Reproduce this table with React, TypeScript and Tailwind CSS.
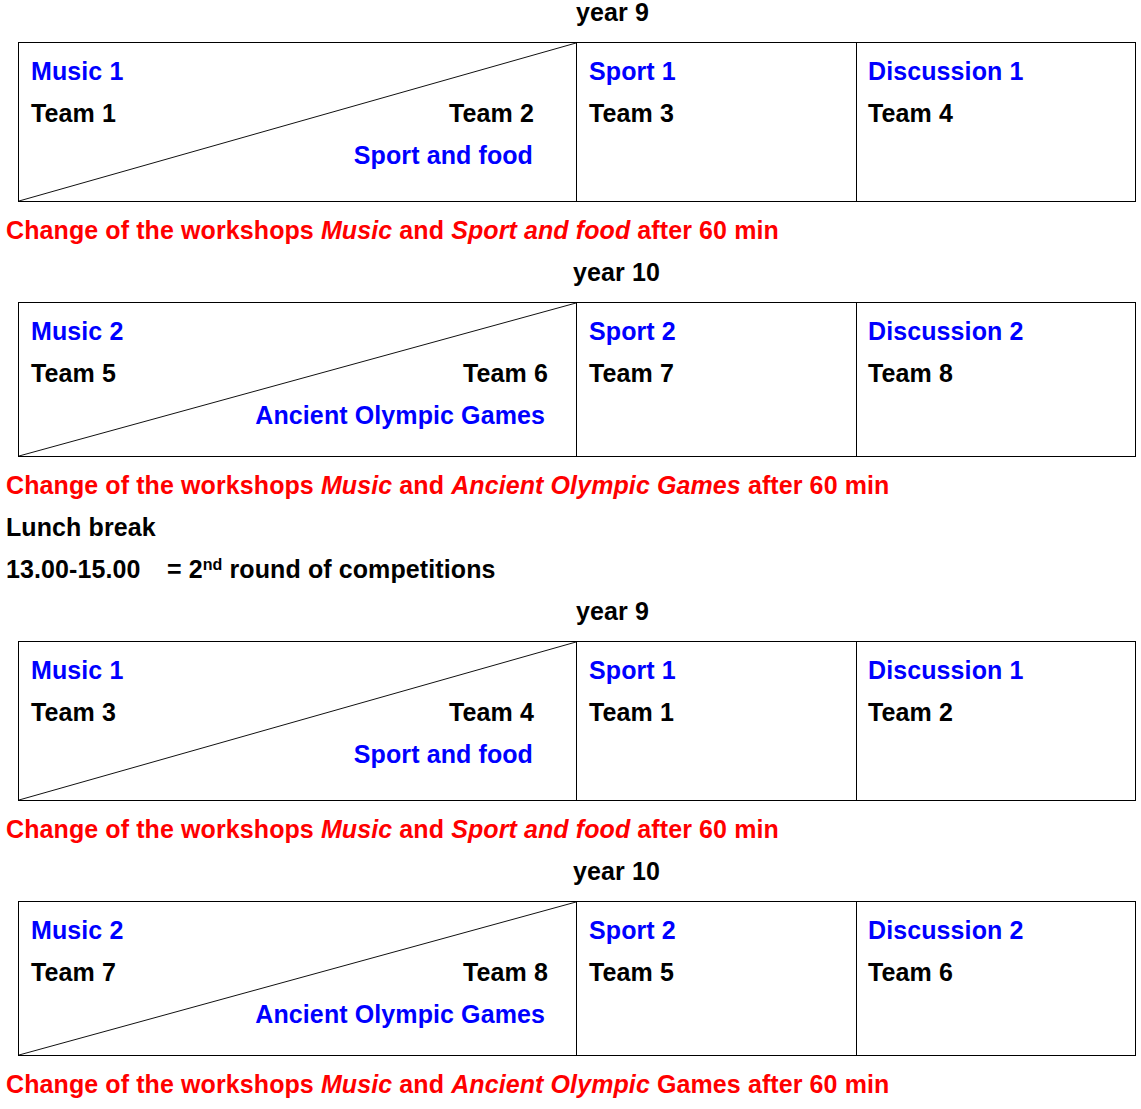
import React from "react";

type Round = {
  year: string;
  yearPad: string;
  height: string;
  music: string;
  teamA: string;
  teamB: string;
  teamBPad: string;
  other: string;
  otherPad: string;
  sport: string;
  sportTeam: string;
  disc: string;
  discTeam: string;
};

const morning: Round[] = [
  {
    year: "year 9",
    yearPad: "pl-[576px]",
    height: "h-[160px]",
    music: "Music 1",
    teamA: "Team 1",
    teamB: "Team 2",
    teamBPad: "pr-[42px]",
    other: "Sport and food",
    otherPad: "pr-[43px]",
    sport: "Sport 1",
    sportTeam: "Team 3",
    disc: "Discussion 1",
    discTeam: "Team 4",
  },
  {
    year: "year 10",
    yearPad: "pl-[573px]",
    height: "h-[155px]",
    music: "Music 2",
    teamA: "Team 5",
    teamB: "Team 6",
    teamBPad: "pr-[28px]",
    other: "Ancient Olympic Games",
    otherPad: "pr-[31px]",
    sport: "Sport 2",
    sportTeam: "Team 7",
    disc: "Discussion 2",
    discTeam: "Team 8",
  },
];

const afternoon: Round[] = [
  { ...morning[0], teamA: "Team 3", teamB: "Team 4", sportTeam: "Team 1", discTeam: "Team 2" },
  { ...morning[1], teamA: "Team 7", teamB: "Team 8", sportTeam: "Team 5", discTeam: "Team 6" },
];

const Table = ({ r, first }: { r: Round; first?: boolean }) => (
  <div
    className={`${first ? "mt-[18px]" : "mt-[9px]"} ${r.height} ml-[18px] flex w-[1118px] border border-black`}
  >
    {/* split cell */}
    <div className="relative w-[557px] pl-[12px] pt-[7px]">
      <svg
        className="absolute inset-0 h-full w-full"
        viewBox="0 0 100 100"
        preserveAspectRatio="none"
      >
        <line x1="0" y1="100" x2="100" y2="0" stroke="#111" strokeWidth="1" vectorEffect="non-scaling-stroke" />
      </svg>
      <p className="relative text-[#0000ff]">{r.music}</p>
      <div className={`relative flex justify-between ${r.teamBPad}`}>
        <span>{r.teamA}</span>
        <span>{r.teamB}</span>
      </div>
      <p className={`relative text-right text-[#0000ff] ${r.otherPad}`}>{r.other}</p>
    </div>

    <div className="w-[280px] border-l border-black pl-[12px] pt-[7px]">
      <p className="text-[#0000ff]">{r.sport}</p>
      <p>{r.sportTeam}</p>
    </div>

    <div className="flex-1 border-l border-black pl-[11px] pt-[7px]">
      <p className="text-[#0000ff]">{r.disc}</p>
      <p>{r.discTeam}</p>
    </div>
  </div>
);

const Change = ({ children }: { children: React.ReactNode }) => (
  <p className="mt-[7px] pl-[6px] text-[#ff0000]">{children}</p>
);

const Block = ({ r, first, note }: { r: Round; first?: boolean; note: React.ReactNode }) => (
  <>
    <p className={`${first ? "leading-[24px]" : ""} ${r.yearPad}`}>{r.year}</p>
    <Table r={r} first={first} />
    <Change>{note}</Change>
  </>
);

export default function App() {
  return (
    <div className="min-h-screen w-[1141px] bg-white font-['Liberation_Sans',Arial,sans-serif] text-[25px] font-bold leading-[42px] tracking-[0.1px] text-black">
      <Block
        r={morning[0]}
        first
        note={
          <>
            Change of the workshops <i>Music</i> and <i>Sport and food</i> after 60 min
          </>
        }
      />
      <Block
        r={morning[1]}
        note={
          <>
            Change of the workshops <i>Music</i> and <i>Ancient Olympic Games</i> after 60 min
          </>
        }
      />

      <p className="pl-[6px]">Lunch break</p>
      <p className="pl-[6px]">
        <span className="inline-block w-[161px]">13.00-15.00</span>= 2<sup className="text-[16px]">nd</sup> round of
        competitions
      </p>

      <Block
        r={afternoon[0]}
        note={
          <>
            Change of the workshops <i>Music</i> and <i>Sport and food</i> after 60 min
          </>
        }
      />
      <Block
        r={afternoon[1]}
        note={
          <>
            Change of the workshops <i>Music</i> and <i>Ancient Olympic</i> Games after 60 min
          </>
        }
      />
    </div>
  );
}
